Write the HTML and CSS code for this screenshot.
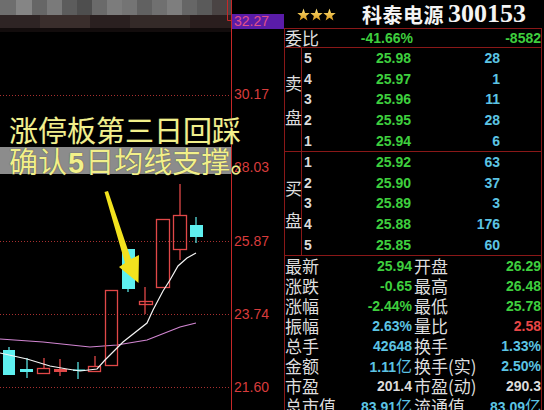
FILE: index.html
```html
<!DOCTYPE html>
<html lang="zh-CN">
<head>
<meta charset="utf-8"/>
<meta content="width=device-width, initial-scale=1.0" name="viewport"/>
<title>科泰电源 300153</title>
<link rel="stylesheet" href="styles.css">
</head>
<body>
<div class="screen">

  <!-- K line chart -->
  <div class="chart">
    <svg class="kline" width="231" height="410" viewBox="0 0 231 410">
      <!-- blurred toolbar strip -->
      <g class="strip">
        <rect x="0" y="0" width="16" height="15" fill="#6e6e6e"/>
        <rect x="16" y="0" width="16" height="15" fill="#858585"/>
        <rect x="32" y="0" width="15" height="15" fill="#666"/>
        <rect x="47" y="0" width="15" height="15" fill="#7a7a7a"/>
        <rect x="62" y="0" width="15" height="15" fill="#5c5c5c"/>
        <rect x="77" y="0" width="15" height="15" fill="#4e4e4e"/>
        <rect x="92" y="0" width="15" height="15" fill="#6a6a6a"/>
        <rect x="107" y="0" width="15" height="15" fill="#7c7c7c"/>
        <rect x="122" y="0" width="15" height="15" fill="#747474"/>
        <rect x="137" y="0" width="15" height="15" fill="#616161"/>
        <rect x="152" y="0" width="15" height="15" fill="#707070"/>
        <rect x="167" y="0" width="15" height="15" fill="#7e7e7e"/>
        <rect x="182" y="0" width="15" height="15" fill="#666"/>
        <rect x="197" y="0" width="15" height="15" fill="#5a5a5a"/>
        <rect x="212" y="0" width="19" height="15" fill="#4a4444"/>
        <rect x="0" y="15" width="40" height="13" fill="#2e2424"/>
        <rect x="40" y="15" width="50" height="13" fill="#3a2e2c"/>
        <rect x="90" y="15" width="40" height="13" fill="#2a2020"/>
        <rect x="130" y="15" width="60" height="13" fill="#342a28"/>
        <rect x="190" y="15" width="41" height="13" fill="#2a1e1e"/>
        <rect x="0" y="28" width="231" height="4" fill="#120c0c"/>
        <path d="M227.5 0 V20.5 H231" fill="none" stroke="#c62828" stroke-width="1"/>
      </g>

      <!-- price grid -->
      <g class="grid" stroke="#a83030" stroke-width="1" stroke-dasharray="1 2">
        <line x1="0" y1="95.5" x2="231" y2="95.5"/>
        <line x1="0" y1="167.5" x2="231" y2="167.5"/>
        <line x1="0" y1="241.5" x2="231" y2="241.5"/>
        <line x1="0" y1="314.5" x2="231" y2="314.5"/>
        <line x1="0" y1="387.5" x2="231" y2="387.5"/>
      </g>

      <!-- moving averages -->
      <polyline fill="none" stroke="#d286d2" stroke-width="1.2"
        points="0,339 43,342 90,347 117,345 147,340 180,327 196,323"/>

      <!-- candles -->
      <g class="up" fill="none" stroke="#e04848" stroke-width="1.3">
        <line x1="44" y1="358" x2="44" y2="368"/>
        <rect x="37.5" y="368.5" width="12" height="5"/>
        <line x1="95" y1="356" x2="95" y2="366"/>
        <rect x="88.5" y="366.5" width="12" height="5"/>
        <rect x="105.5" y="290.5" width="12" height="75"/>
        <line x1="145" y1="287" x2="145" y2="314"/>
        <rect x="139.5" y="301.5" width="13" height="3"/>
        <rect x="156.5" y="219.5" width="13" height="68"/>
        <line x1="180" y1="184" x2="180" y2="215"/>
        <line x1="180" y1="249" x2="180" y2="260"/>
        <rect x="173.5" y="215.5" width="13" height="34"/>
      </g>
      <g class="flat">
        <line x1="60" y1="359" x2="60" y2="376" stroke="#e04848" stroke-width="1.3"/>
        <rect x="54" y="369" width="13" height="3" fill="#e04848"/>
      </g>
      <g class="down" fill="#5ef0f0" stroke="#5ef0f0" stroke-width="1.2">
        <line x1="9" y1="347" x2="9" y2="351"/>
        <rect x="3" y="350" width="12" height="25" stroke="none"/>
        <line x1="27" y1="358" x2="27" y2="378"/>
        <rect x="20" y="369" width="13" height="3" stroke="none"/>
        <line x1="78" y1="362" x2="78" y2="379"/>
        <rect x="73" y="369.5" width="12" height="1.5" stroke="none"/>
        <line x1="128" y1="287" x2="128" y2="292"/>
        <rect x="122" y="249" width="13" height="40" stroke="none"/>
        <line x1="196" y1="217" x2="196" y2="243"/>
        <rect x="190" y="225" width="13" height="12" stroke="none"/>
      </g>

      <polyline fill="none" stroke="#f4f4f4" stroke-width="1.2"
        points="0,353 27,359 50,366 67,369 80,371 97,369 105,360 123,342 147,323 153,310 163,291 170,280 178,266 187,258 196,253"/>

      <!-- pointer arrow -->
      <polygon fill="#f2e21e" points="104.5,192 108,191 131,259 139,255 138.5,283 119,267 125,263"/>
    </svg>

    <div class="caption">
      <p class="caption-line">涨停板第三日回踩</p>
      <p class="caption-line shaded">确认<b>5</b>日均线支撑。</p>
    </div>
  </div>

  <!-- price scale -->
  <div class="axis">
    <span class="tick current">32.27</span>
    <span class="tick">30.17</span>
    <span class="tick">28.03</span>
    <span class="tick">25.87</span>
    <span class="tick">23.74</span>
    <span class="tick">21.60</span>
  </div>

  <!-- quote panel -->
  <div class="quote">
    <div class="quote-head">
      <svg class="stars" width="40" height="14" viewBox="0 0 40 14">
        <defs>
          <linearGradient id="gold" x1="0" y1="0" x2="0" y2="1">
            <stop offset="0" stop-color="#ffe27a"/>
            <stop offset="1" stop-color="#d99a1c"/>
          </linearGradient>
        </defs>
        <polygon fill="url(#gold)" points="6.5,0.5 8.1,4.9 12.7,5 9.1,7.9 10.4,12.4 6.5,9.8 2.6,12.4 3.9,7.9 0.3,5 4.9,4.9"/>
        <polygon fill="url(#gold)" points="19.5,0.5 21.1,4.9 25.7,5 22.1,7.9 23.4,12.4 19.5,9.8 15.6,12.4 16.9,7.9 13.3,5 17.9,4.9"/>
        <polygon fill="url(#gold)" points="32.5,0.5 34.1,4.9 38.7,5 35.1,7.9 36.4,12.4 32.5,9.8 28.6,12.4 29.9,7.9 26.3,5 30.9,4.9"/>
      </svg>
      <span class="name">科泰电源</span>
      <span class="code">300153</span>
    </div>

    <div class="quote-body">
      <div class="ratio">
        <span class="label">委比</span>
        <span class="num green">-41.66%</span>
        <span class="num green">-8582</span>
      </div>

      <div class="side sell">
        <div class="side-label">卖<br>盘</div>
        <div class="levels">
          <div class="level"><span class="lv">5</span><span class="num green">25.98</span><span class="num blue">28</span></div>
          <div class="level"><span class="lv">4</span><span class="num green">25.97</span><span class="num blue">1</span></div>
          <div class="level"><span class="lv">3</span><span class="num green">25.96</span><span class="num blue">11</span></div>
          <div class="level"><span class="lv">2</span><span class="num green">25.95</span><span class="num blue">28</span></div>
          <div class="level"><span class="lv">1</span><span class="num green">25.94</span><span class="num blue">6</span></div>
        </div>
      </div>

      <div class="side buy">
        <div class="side-label">买<br>盘</div>
        <div class="levels">
          <div class="level"><span class="lv">1</span><span class="num green">25.92</span><span class="num blue">63</span></div>
          <div class="level"><span class="lv">2</span><span class="num green">25.90</span><span class="num blue">37</span></div>
          <div class="level"><span class="lv">3</span><span class="num green">25.89</span><span class="num blue">3</span></div>
          <div class="level"><span class="lv">4</span><span class="num green">25.88</span><span class="num blue">176</span></div>
          <div class="level"><span class="lv">5</span><span class="num green">25.85</span><span class="num blue">60</span></div>
        </div>
      </div>

      <div class="stats">
        <span class="label">最新</span><span class="num green">25.94</span>
        <span class="label second">开盘</span><span class="num green">26.29</span>

        <span class="label">涨跌</span><span class="num green">-0.65</span>
        <span class="label second">最高</span><span class="num green">26.48</span>

        <span class="label">涨幅</span><span class="num green">-2.44%</span>
        <span class="label second">最低</span><span class="num green">25.78</span>

        <span class="label">振幅</span><span class="num blue">2.63%</span>
        <span class="label second">量比</span><span class="num red">2.58</span>

        <span class="label">总手</span><span class="num blue">42648</span>
        <span class="label second">换手</span><span class="num blue">1.33%</span>

        <span class="label">金额</span><span class="num blue">1.11<i>亿</i></span>
        <span class="label second">换手(实)</span><span class="num blue">2.50%</span>

        <span class="label">市盈</span><span class="num white">201.4</span>
        <span class="label second">市盈(动)</span><span class="num white">290.3</span>

        <span class="label">总市值</span><span class="num blue">83.91<i>亿</i></span>
        <span class="label second">流通值</span><span class="num blue">83.09<i>亿</i></span>
      </div>
    </div>
  </div>

</div>
</body>
</html>
```

FILE: styles.css
```css
body {
    margin: 0;
    padding: 0;
    background: #000000;
    font-family: "Liberation Sans", Arial, sans-serif;
    color: #dcdcdc;
}

.screen {
    display: flex;
    width: 544px;
    height: 410px;
    overflow: hidden;
    background: #000000;
}

/* chart */
.chart {
    position: relative;
    width: 231px;
    height: 410px;
    border-right: 1px solid #c62828;
    flex-shrink: 0;
}

.kline {
    display: block;
}

.caption {
    position: absolute;
    left: 0;
    top: 114px;
    width: 231px;
    z-index: 2;
}

.caption-line {
    margin: 0;
    padding-left: 9px;
    font-family: "Noto Sans CJK SC", sans-serif;
    font-size: 29px;
    line-height: 31px;
    height: 31px;
    color: #f2f08a;
    white-space: nowrap;
    text-shadow: 0 0 1px #333;
}

.caption-line.shaded {
    margin-top: 2px;
    height: 27px;
    line-height: 27px;
    width: 222px;
    background: #8c8c8c;
}

.caption-line b {
    font-family: "Liberation Sans", Arial, sans-serif;
    font-weight: bold;
    padding: 0 1px;
}

/* price axis */
.axis {
    display: flex;
    flex-direction: column;
    gap: 58.2px;
    width: 52px;
    padding-top: 14px;
    flex-shrink: 0;
}

.tick {
    display: block;
    height: 15px;
    line-height: 15px;
    padding-left: 2px;
    font-size: 14px;
    color: #d83c3c;
}

.tick.current {
    background: #5a1ca8;
    color: #e0508a;
}

/* quote panel */
.quote {
    width: 258px;
    flex-shrink: 0;
}

.quote-head {
    display: flex;
    align-items: center;
    height: 28px;
    padding-left: 13px;
    white-space: nowrap;
}

.stars {
    display: block;
    margin-top: 1px;
}

.name {
    margin-left: 25px;
    font-family: "Noto Sans CJK SC", sans-serif;
    font-weight: bold;
    font-size: 20px;
    color: #f4f4f4;
    letter-spacing: 0.5px;
}

.code {
    margin-left: 4px;
    font-family: "Liberation Serif", "Times New Roman", serif;
    font-weight: bold;
    font-size: 26px;
    color: #f4f4f4;
}

.quote-body {
    border-left: 1px solid #8a1818;
    border-right: 1px solid #8a1818;
    border-top: 1px solid #8a1818;
    height: 400px;
}

.label {
    font-family: "Noto Sans CJK SC", sans-serif;
    font-size: 17px;
    line-height: 18px;
    color: #dedede;
    white-space: nowrap;
}

.num {
    font-family: "Liberation Sans", Arial, sans-serif;
    font-weight: bold;
    font-size: 14px;
    line-height: 18px;
    text-align: right;
    white-space: nowrap;
}

.num i {
    font-style: normal;
    font-weight: normal;
    font-family: "Noto Sans CJK SC", sans-serif;
    font-size: 16px;
}

.green { color: #3ecf3e; }
.blue { color: #5cc4e4; }
.red { color: #e84646; }
.white { color: #dcdcdc; }

.ratio {
    display: grid;
    grid-template-columns: 50px 78px 128px;
    align-items: center;
    height: 18px;
    border-bottom: 1px solid #8a1818;
}

.side {
    display: flex;
    border-bottom: 1px solid #8a1818;
}

.side-label {
    display: flex;
    flex-direction: column;
    justify-content: center;
    width: 17px;
    border-right: 1px solid #8a1818;
    font-family: "Noto Sans CJK SC", sans-serif;
    font-size: 17px;
    line-height: 34px;
    color: #dedede;
    padding-top: 1px;
    box-sizing: border-box;
}

.buy .side-label {
    line-height: 32px;
}

.levels {
    display: flex;
    flex-direction: column;
}

.level {
    display: grid;
    grid-template-columns: 20px 89px 89px;
    align-items: center;
    height: 20.6px;
}

.lv {
    padding-left: 2px;
    font-weight: bold;
    font-size: 14px;
    line-height: 18px;
    color: #dcdcdc;
}

.stats {
    display: grid;
    grid-template-columns: 50px 77px 60px 69px;
    grid-auto-rows: 20px;
    align-items: center;
}

.stats .second {
    padding-left: 2px;
}
```
